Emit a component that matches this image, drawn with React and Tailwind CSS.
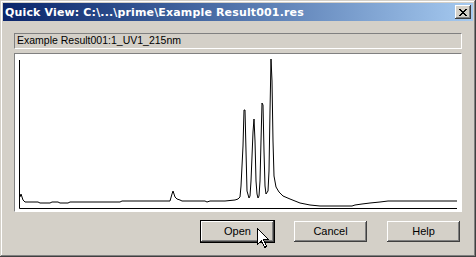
import React from 'react';

const trace = [
    [20, 196], [21, 193], [23, 199], [25, 201], [38, 201], [40, 202], [50, 202], [52, 201], [58, 201], [60, 202],
    [68, 202], [70, 201], [120, 201], [122, 200], [170, 200], [172, 193], [173, 190], [175, 196], [177, 198],
    [180, 199], [182, 200], [205, 200], [207, 201], [210, 200], [225, 200], [235, 199], [238, 198], [240, 196],
    [241, 185], [243, 145], [244, 109], [245, 109], [246, 150], [247, 190], [249, 197], [250, 195], [251, 180],
    [253, 131], [254, 118], [255, 140], [256, 180], [257, 193], [258, 197], [259, 195], [260, 180], [261, 140],
    [262, 102], [263, 104], [264, 150], [265, 185], [266, 193], [268, 190], [269, 170], [270, 110], [271, 58],
    [272, 80], [273, 140], [274, 175], [276, 186], [279, 191], [283, 195], [290, 198], [300, 202], [310, 204],
    [320, 205], [352, 205], [355, 204], [362, 203], [370, 202], [380, 201], [388, 200], [457, 200],
];

function Win2kButton({ label, isDefault }) {
    return (
        <div className={isDefault ? 'border border-black' : 'border border-transparent'}>
            <div className="w-[73px] h-[21px] flex items-center justify-center bg-[#d4d0c8] text-[11px] text-black shadow-[inset_-1px_-1px_#404040,inset_1px_1px_#ffffff,inset_-2px_-2px_#808080]">
                {label}
            </div>
        </div>
    );
}

export default function App() {
    const points = trace.map(p => p.join(',')).join(' ');

    return (
        <div className="relative w-[476px] h-[257px] bg-[#d4d0c8] p-[3px] flex flex-col shadow-[inset_-1px_-1px_#404040,inset_1px_1px_#d4d0c8,inset_-2px_-2px_#808080,inset_2px_2px_#ffffff]" style={{ fontFamily: '"Liberation Sans", Arial, sans-serif' }}>
            {/* title bar */}
            <div className="h-[18px] flex items-center justify-between pl-[2px] pr-[2px] bg-gradient-to-r from-[#0a246a] to-[#a6caf0]">
                <span className="text-white font-bold text-[11px] leading-none whitespace-nowrap tracking-[0.15px] font-['DejaVu_Sans',sans-serif]">
                    Quick View: C:\...\prime\Example Result001.res
                </span>
                <div className="w-[16px] h-[14px] bg-[#d4d0c8] flex items-center justify-center shadow-[inset_-1px_-1px_#404040,inset_1px_1px_#ffffff,inset_-2px_-2px_#808080]">
                    <svg width="8" height="7" viewBox="0 0 8 7" shapeRendering="crispEdges">
                        <path d="M0 0h2v1H0zM6 0h2v1H6zM1 1h2v1H1zM5 1h2v1H5zM2 2h4v1H2zM3 3h2v1H3zM2 4h4v1H2zM1 5h2v1H1zM5 5h2v1H5zM0 6h2v1H0zM6 6h2v1H6z" fill="#000" />
                    </svg>
                </div>
            </div>

            <div className="flex flex-col px-[11px]">
                {/* chromatogram name */}
                <div className="mt-[12px] h-[16px] flex items-center pl-[2px] border border-t-[#808080] border-l-[#808080] border-b-white border-r-white text-[10.5px] text-black">
                    Example Result001:1_UV1_215nm
                </div>

                {/* plot */}
                <div className="mt-[4px] h-[159px] bg-white border border-t-[#808080] border-l-[#808080] border-b-white border-r-white">
                    <svg width="448" height="157" viewBox="15 53 448 157" className="block">
                        <path d="M19.5 59 V207.5 H457" fill="none" stroke="#000" strokeWidth="1" />
                        <polyline points={points} fill="none" stroke="#000" strokeWidth="1" strokeLinejoin="round" />
                    </svg>
                </div>
            </div>

            {/* buttons */}
            <div className="mt-[8px] flex justify-end gap-[18px] pr-[12px]">
                <Win2kButton label="Open" isDefault />
                <Win2kButton label="Cancel" />
                <Win2kButton label="Help" />
            </div>

            {/* mouse pointer */}
            <svg className="absolute left-[257px] top-[228px]" width="12" height="20" viewBox="0 0 12 20" shapeRendering="crispEdges">
                <path d="M0.5 0.5 V16.5 L4.5 12.5 L7.5 19.5 L9.5 18.5 L6.5 11.5 H11.5 Z" fill="#fff" stroke="#000" strokeWidth="1" />
            </svg>
        </div>
    );
}
